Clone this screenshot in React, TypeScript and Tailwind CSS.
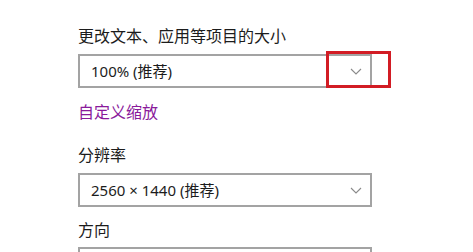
import React from 'react'

const font = { fontFamily: '"Noto Sans", "Noto Sans CJK SC", sans-serif' }

function Chevron() {
  return (
    <svg width="12" height="7" viewBox="0 0 12 7" fill="none" stroke="#8a8a8a" strokeWidth="1.1">
      <polyline points="1,1 6,6 11,1" />
    </svg>
  )
}

function Dropdown({ value, highlight }: { value: string; highlight?: boolean }) {
  return (
    <div className="relative flex h-[34px] w-[294px] items-center justify-between border-2 border-[#a3a3a3] pl-[11px] pr-[8px]">
      <span className="text-[15px] leading-none text-[#1c1c1c]">{value}</span>
      <Chevron />
      {highlight && (
        <div className="absolute left-[246px] top-[-5px] h-[37px] w-[65px] border-[3px] border-[#d21c24]" />
      )}
    </div>
  )
}

export default function App() {
  return (
    <div className="h-[252px] w-[473px] overflow-hidden bg-white pl-[78px] pt-[25px]" style={font}>
      {/* 缩放与布局 */}
      <div className="text-[16px] leading-[22px] text-[#1c1c1c]">更改文本、应用等项目的大小</div>
      <div className="mt-[7px]">
        <Dropdown value="100% (推荐)" highlight />
      </div>
      <div className="mt-[13px] text-[16px] leading-[22px] text-[#8a1a9b]">自定义缩放</div>

      {/* 分辨率 */}
      <div className="mt-[21px] text-[16px] leading-[22px] text-[#1c1c1c]">分辨率</div>
      <div className="mt-[7px]">
        <Dropdown value="2560 × 1440 (推荐)" />
      </div>

      {/* 方向 */}
      <div className="mt-[12px] text-[16px] leading-[22px] text-[#1c1c1c]">方向</div>
      <div className="mt-[6px] h-[34px] w-[294px] border-2 border-[#a3a3a3]" />
    </div>
  )
}
